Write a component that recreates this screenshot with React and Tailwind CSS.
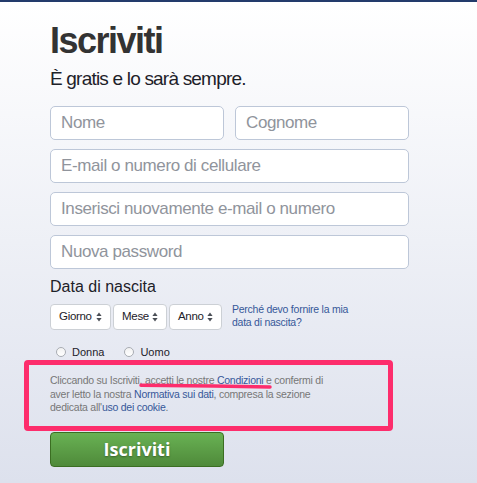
import { useState } from "react";

function Arrows() {
  return (
    <svg width="6" height="10" viewBox="0 0 6 10" className="shrink-0">
      <path d="M3 0.5 L5.6 4 L0.4 4 Z" fill="#4b4f56" />
      <path d="M3 9.5 L5.6 6 L0.4 6 Z" fill="#4b4f56" />
    </svg>
  );
}

function DateSelect({ label, width }) {
  return (
    <div
      className={`flex h-[26px] items-center justify-between rounded-[4px] border border-[#ccd0d5] bg-white pl-[8px] pr-[8px] text-[11.5px] tracking-[-0.3px] text-[#1d2129] ${width}`}
    >
      <span>{label}</span>
      <Arrows />
    </div>
  );
}

function Field({ placeholder, className = "" }) {
  return (
    <input
      type="text"
      placeholder={placeholder}
      className={`h-[34px] rounded-[5px] border border-[#bdc7d8] bg-white px-[10px] text-[17px] tracking-[-0.4px] text-[#1d2129] placeholder:text-[#90949c] outline-none ${className}`}
    />
  );
}

function Radio({ label, checked, onClick }) {
  return (
    <label className="flex items-center gap-[6px] cursor-pointer" onClick={onClick}>
      <span className="flex h-[10px] w-[10px] items-center justify-center rounded-full border border-[#a9adb3] bg-gradient-to-b from-[#f2f2f2] to-[#ffffff]">
        {checked && <span className="h-[4px] w-[4px] rounded-full bg-[#4b4f56]" />}
      </span>
      <span>{label}</span>
    </label>
  );
}

export default function App() {
  const [sex, setSex] = useState(null);

  return (
    <div
      className="h-[483px] w-full overflow-hidden border-t-2 border-[#233b6b] bg-gradient-to-b from-[#ffffff] to-[#dde1ed] font-['Liberation_Sans',Arial,sans-serif]"
    >
      <div className="ml-[50px] w-[359px] pt-[17px]">
        {/* Header */}
        <h1 className="text-[36px] font-bold leading-[43px] tracking-[-1.5px] text-[#333333]">
          Iscriviti
        </h1>
        <p className="mt-[5px] text-[19px] leading-[24px] tracking-[-0.8px] text-[#1d2129]">
          È gratis e lo sarà sempre.
        </p>

        {/* Fields */}
        <div className="mt-[15px] flex flex-col gap-[9px]">
          <div className="flex justify-between">
            <Field placeholder="Nome" className="w-[174px]" />
            <Field placeholder="Cognome" className="w-[174px]" />
          </div>
          <Field placeholder="E-mail o numero di cellulare" className="w-full" />
          <Field placeholder="Inserisci nuovamente e-mail o numero" className="w-full" />
          <Field placeholder="Nuova password" className="w-full" />
        </div>

        {/* Birthday */}
        <div className="mt-[8px] text-[16px] leading-[20px] text-[#1d2129]">Data di nascita</div>
        <div className="mt-[7px] flex items-center">
          <div className="flex gap-[2px]">
            <DateSelect label="Giorno" width="w-[61px]" />
            <DateSelect label="Mese" width="w-[54px]" />
            <DateSelect label="Anno" width="w-[53px]" />
          </div>
          <a
            href="#"
            className="ml-[10px] -mt-[2px] text-[10.5px] leading-[13px] tracking-[-0.25px] text-[#365899]"
          >
            Perché devo fornire la mia
            <br />
            data di nascita?
          </a>
        </div>

        <div className="mt-[14px] flex h-[16px] items-center gap-[20px] pl-[6px] text-[11px] text-[#1d2129]">
          <Radio label="Donna" checked={sex === "f"} onClick={() => setSex("f")} />
          <Radio label="Uomo" checked={sex === "m"} onClick={() => setSex("m")} />
        </div>

        {/* Terms, highlighted */}
        <div className="relative -ml-[26px] w-[369px] rounded-[4px] border-[5px] border-[#fd2d6c] pb-[11px] pl-[21px] pt-[9px] text-[10.5px] leading-[13.5px] tracking-[-0.25px] text-[#777777]">
          Cliccando su Iscriviti, accetti le nostre <a href="#" className="text-[#365899]">Condizioni</a> e confermi di
          <br />
          aver letto la nostra <a href="#" className="text-[#365899]">Normativa sui dati</a>, compresa la sezione
          <br />
          dedicata all'<a href="#" className="text-[#365899]">uso dei cookie</a>.
          <svg
            width="134"
            height="8"
            viewBox="0 0 134 8"
            className="pointer-events-none absolute left-[110px] top-[17px]"
          >
            <path
              d="M2 3.2 C 40 3.6, 90 4.2, 131 5"
              stroke="#fd2d6c"
              strokeWidth="3.5"
              strokeLinecap="round"
              fill="none"
            />
          </svg>
        </div>

        {/* Submit */}
        <button
          type="button"
          className="mt-[1px] flex h-[35px] w-[174px] items-center justify-center rounded-[4px] border border-[#3b6e22] bg-gradient-to-b from-[#69b254] to-[#4f8a3a] font-['Open_Sans',sans-serif] text-[18px] font-bold text-white [text-shadow:0_1px_2px_rgba(0,0,0,0.35)]"
        >
          Iscriviti
        </button>
      </div>
    </div>
  );
}
